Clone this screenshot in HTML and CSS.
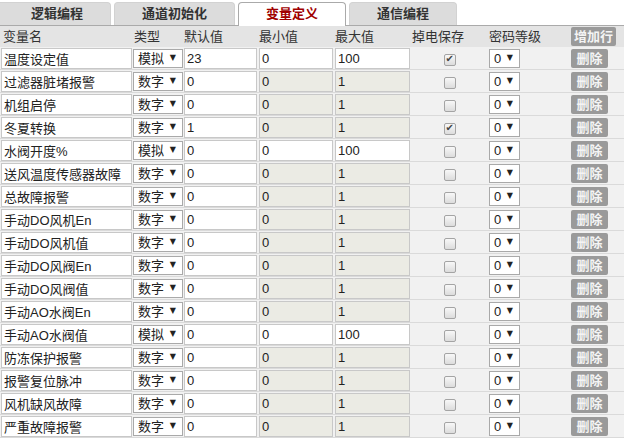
FILE: index.html
```html
<!DOCTYPE html>
<html lang="zh-CN">
<head>
  <meta charset="UTF-8" />
  <meta name="viewport" content="width=device-width, initial-scale=1.0" />
  <title>变量定义</title>
  <link rel="stylesheet" href="styles.css">
</head>
<body>

  <!-- Tabs -->
  <div class="tabs">
    <div class="tab">逻辑编程</div>
    <div class="tab">通道初始化</div>
    <div class="tab active">变量定义</div>
    <div class="tab">通信编程</div>
  </div>

  <!-- Variable table -->
  <table class="var-table">
    <colgroup>
      <col style="width: 133px">
      <col style="width: 50px">
      <col style="width: 75px">
      <col style="width: 76px">
      <col style="width: 77px">
      <col style="width: 77px">
      <col style="width: 82px">
      <col style="width: 54px">
    </colgroup>
    <thead>
      <tr>
        <th class="first">变量名</th>
        <th>类型</th>
        <th>默认值</th>
        <th>最小值</th>
        <th>最大值</th>
        <th>掉电保存</th>
        <th>密码等级</th>
        <th><button class="btn btn-add">增加行</button></th>
      </tr>
    </thead>
    <tbody id="varRows"></tbody>
  </table>

  <script>
    // name, type, default value, saved on power loss
    const vars = [
      ['温度设定值', '模拟', 23, true],
      ['过滤器脏堵报警', '数字', 0, false],
      ['机组启停', '数字', 0, false],
      ['冬夏转换', '数字', 1, true],
      ['水阀开度%', '模拟', 0, false],
      ['送风温度传感器故障', '数字', 0, false],
      ['总故障报警', '数字', 0, false],
      ['手动DO风机En', '数字', 0, false],
      ['手动DO风机值', '数字', 0, false],
      ['手动DO风阀En', '数字', 0, false],
      ['手动DO风阀值', '数字', 0, false],
      ['手动AO水阀En', '数字', 0, false],
      ['手动AO水阀值', '模拟', 0, false],
      ['防冻保护报警', '数字', 0, false],
      ['报警复位脉冲', '数字', 0, false],
      ['风机缺风故障', '数字', 0, false],
      ['严重故障报警', '数字', 0, false]
    ];

    let tbody = document.getElementById('varRows');

    vars.forEach(([name, type, def, keep]) => {
      const analog = type === '模拟';
      const lock = analog ? '' : ' disabled';
      const tr = document.createElement('tr');
      tr.innerHTML = `
        <td><input class="field" type="text" value="${name}"></td>
        <td class="type"><span class="sel"><select>
          <option${analog ? ' selected' : ''}>模拟</option>
          <option${analog ? '' : ' selected'}>数字</option>
        </select></span></td>
        <td><input class="field" type="text" value="${def}"></td>
        <td><input class="field" type="text" value="0"${lock}></td>
        <td><input class="field" type="text" value="${analog ? 100 : 1}"${lock}></td>
        <td class="center"><input class="chk" type="checkbox"${keep ? ' checked' : ''}></td>
        <td class="level"><span class="sel"><select><option>0</option><option>1</option><option>2</option></select></span></td>
        <td><button class="btn btn-del">删除</button></td>`;
      tbody.appendChild(tr);
    });
  </script>

</body>
</html>
```

FILE: styles.css
```css
* {
  margin: 0;
  padding: 0;
  box-sizing: border-box;
}

html, body {
  background-color: #fff;
  font-family: "Liberation Sans", "Noto Sans CJK SC", sans-serif;
  font-size: 13px;
  color: #222;
  overflow: hidden;
}

/* === TABS === */
.tabs {
  display: flex;
  align-items: flex-end;
  height: 26px;
  border-bottom: 1px solid #aaa;
}

.tab {
  height: 23px;
  line-height: 22px;
  padding: 0 27px;
  margin-right: 3px;
  background: #dcdcdc;
  border: 1px solid #d2d2d2;
  border-bottom: none;
  border-radius: 4px 4px 0 0;
  font-weight: bold;
  color: #333;
}

.tab:first-child {
  padding-left: 31px;
  border-left: none;
  border-radius: 0 4px 0 0;
}

.tab.active {
  height: 24px;
  margin-bottom: -1px;
  background: #fff;
  border-color: #aaa;
  color: #a00000;
}

/* === VARIABLE TABLE === */
.var-table {
  width: 624px;
  table-layout: fixed;
  border-collapse: separate;
  border-spacing: 0;
  background: #f1f1f1;
}

.var-table th {
  height: 21px;
  padding: 0 1px;
  background: #e4e4e4;
  text-align: left;
  font-weight: normal;
  color: #333;
  line-height: 21px;
}

.var-table th.first {
  padding-left: 3px;
}

.var-table td {
  height: 23px;
  padding: 0 1px;
  border-bottom: 1px solid #dadada;
  vertical-align: middle;
}

.var-table td.type {
  padding: 0;
}

.var-table td.center {
  text-align: center;
}

.field {
  display: block;
  width: 100%;
  height: 21px;
  padding: 0 2px;
  border: 1px solid #c8c8c8;
  background: #fff;
  font: inherit;
  color: #222;
  outline: none;
}

.field:disabled {
  background: #ebebe4;
  color: #222;
}

/* Select with drawn arrow */
.sel {
  position: relative;
  display: inline-block;
  vertical-align: middle;
}

.sel select {
  appearance: none;
  -webkit-appearance: none;
  display: block;
  height: 19px;
  padding: 0 12px 0 4px;
  border: 1px solid #a9a9a9;
  border-radius: 0;
  background: #fff;
  font: inherit;
  line-height: 17px;
  color: #222;
}

.sel::after {
  content: "▼";
  position: absolute;
  right: 7px;
  top: 4px;
  font-family: "DejaVu Sans", sans-serif;
  font-size: 8px;
  color: #222;
  pointer-events: none;
}

.type select {
  width: 50px;
}

.level select {
  width: 31px;
}

/* Checkbox */
.chk {
  appearance: none;
  -webkit-appearance: none;
  position: relative;
  width: 12px;
  height: 12px;
  margin-top: 4px;
  border: 1px solid #a4a4a4;
  border-radius: 2px;
  background: linear-gradient(#f8f8f8, #dcdcdc);
  vertical-align: middle;
}

.chk:checked::after {
  content: "✔";
  position: absolute;
  left: 1px;
  top: -2px;
  font-family: "DejaVu Sans", sans-serif;
  font-size: 10px;
  color: #444;
}

/* Buttons */
.btn {
  height: 19px;
  border: none;
  border-radius: 2px;
  background: #9a9a9a;
  color: #f4f4f4;
  font: inherit;
  font-weight: bold;
  line-height: 19px;
  cursor: pointer;
}

.btn-add {
  width: 45px;
}

.btn-del {
  width: 37px;
}
```
